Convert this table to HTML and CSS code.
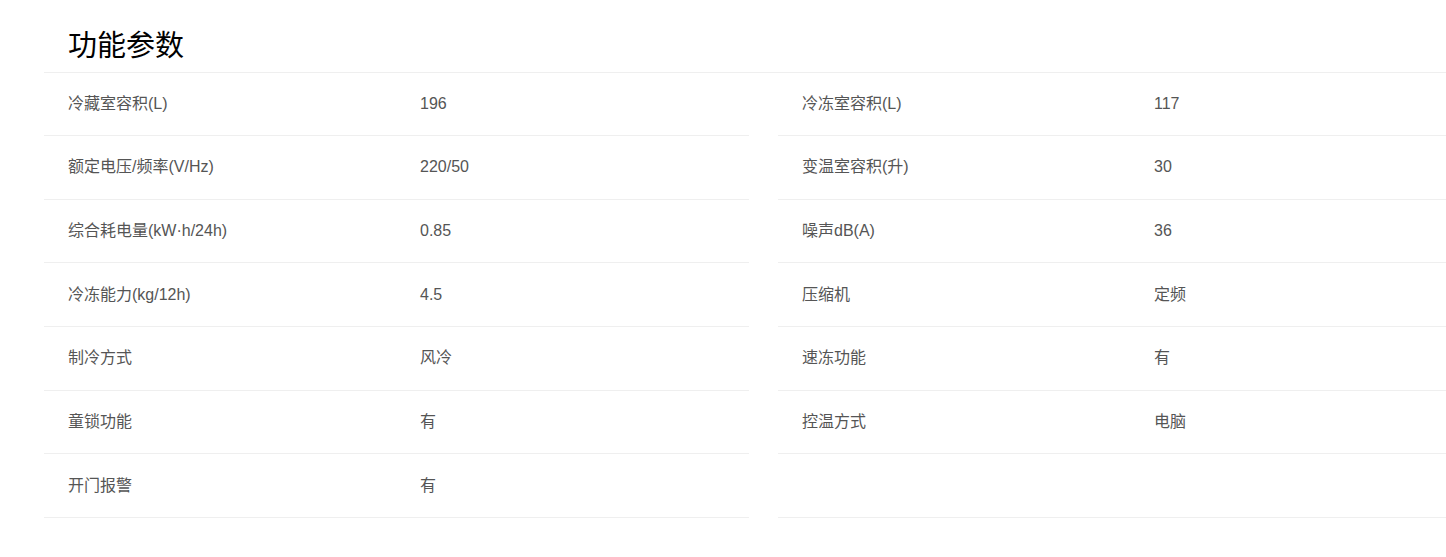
FILE: index.html
```html
<!DOCTYPE html>
<html lang="zh-CN">
<head>
<meta charset="utf-8">
<title>功能参数</title>
<link rel="stylesheet" href="styles.css">
</head>
<body>
<div class="page">
  <div class="params">
    <div class="params-head"><h2 class="params-title">功能参数</h2></div>
    <div class="params-grid">
      <div class="row"><div class="pair"><span class="label">冷藏室容积(L)</span><span class="value">196</span></div></div>
      <div class="row"><div class="pair"><span class="label">冷冻室容积(L)</span><span class="value">117</span></div></div>
      <div class="row"><div class="pair"><span class="label">额定电压/频率(V/Hz)</span><span class="value">220/50</span></div></div>
      <div class="row"><div class="pair"><span class="label">变温室容积(升)</span><span class="value">30</span></div></div>
      <div class="row"><div class="pair"><span class="label">综合耗电量(kW·h/24h)</span><span class="value">0.85</span></div></div>
      <div class="row"><div class="pair"><span class="label">噪声dB(A)</span><span class="value">36</span></div></div>
      <div class="row"><div class="pair"><span class="label">冷冻能力(kg/12h)</span><span class="value">4.5</span></div></div>
      <div class="row"><div class="pair"><span class="label">压缩机</span><span class="value">定频</span></div></div>
      <div class="row"><div class="pair"><span class="label">制冷方式</span><span class="value">风冷</span></div></div>
      <div class="row"><div class="pair"><span class="label">速冻功能</span><span class="value">有</span></div></div>
      <div class="row"><div class="pair"><span class="label">童锁功能</span><span class="value">有</span></div></div>
      <div class="row"><div class="pair"><span class="label">控温方式</span><span class="value">电脑</span></div></div>
      <div class="row"><div class="pair"><span class="label">开门报警</span><span class="value">有</span></div></div>
      <div class="row"></div>
    </div>
  </div>
</div>
</body>
</html>
```

FILE: styles.css
```css
html, body {
  margin: 0;
  padding: 0;
  background: #fff;
  overflow: hidden;
}
body {
  font-family: "Liberation Sans", Arial, "Noto Sans CJK SC", sans-serif;
  color: #555;
}
.page {
  width: 1446px;
  overflow: hidden;
}
.params {
  margin-left: 44px;
  width: 1439px;
}
.params-head {
  height: 73px;
  box-sizing: border-box;
  padding: 19px 0 0 24px;
  border-bottom: 1px solid #efefef;
}
.params-title {
  margin: 0;
  font-size: 29px;
  line-height: 48px;
  font-weight: 400;
  color: #000;
  font-family: "Noto Sans CJK SC", sans-serif;
}
.params-grid {
  display: grid;
  grid-template-columns: 705px 705px;
  column-gap: 29px;
}
.row {
  display: flex;
  align-items: center;
  height: 63.67px;
  box-sizing: border-box;
  border-bottom: 1px solid #efefef;
  padding: 0 0 4px 24px;
  font-size: 16px;
}
.row:first-child, .row:nth-child(2) {
  height: 63px;
}
.pair {
  display: flex;
  align-items: baseline;
  flex: 1;
}
.label {
  width: 352px;
  flex: none;
}
.value {
  flex: 1;
}
```
